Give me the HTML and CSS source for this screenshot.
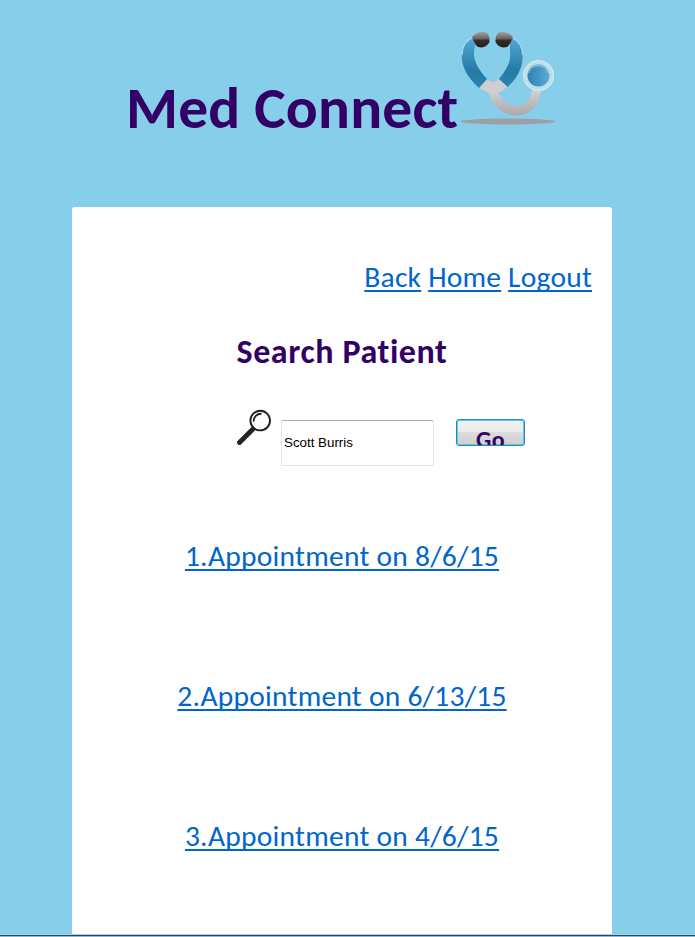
FILE: index.html
```html
<!DOCTYPE html>
<html lang="en">
<head>
<meta charset="utf-8">
<title>Med Connect</title>
<link rel="stylesheet" href="styles.css">
</head>
<body>
<header class="banner">
  <h1 class="brand">Med Connect</h1>
  <svg class="logo" viewBox="0 0 100 100" width="100" height="100" aria-hidden="true">
    <defs>
      <linearGradient id="tube" x1="0" y1="0" x2="0" y2="1"><stop offset="0" stop-color="#55a8d8"/><stop offset=".65" stop-color="#247ba4"/><stop offset="1" stop-color="#2f82ab"/></linearGradient>
      <linearGradient id="tip" x1="0" y1="0" x2="0" y2="1"><stop offset="0" stop-color="#aaa6a5"/><stop offset=".45" stop-color="#69605f"/><stop offset=".55" stop-color="#382d2c"/><stop offset="1" stop-color="#241b1a"/></linearGradient>
      <linearGradient id="metal" x1="0" y1="0" x2="0" y2="1"><stop offset="0" stop-color="#d3d3d5"/><stop offset="1" stop-color="#a9a9ab"/></linearGradient>
      <linearGradient id="disc" x1="0" y1="0" x2="1" y2="0"><stop offset="0" stop-color="#2982b1"/><stop offset="1" stop-color="#5facd5"/></linearGradient>
    </defs>
    <ellipse cx="48" cy="93.500" rx="47.500" ry="3" fill="#9da0a3"/>
    <path d="M28 63 L37 62 Q44 78 57 78 Q70 77 72 62 L81 61 Q78 87 56 87.500 Q36 87 28 63Z" fill="url(#metal)"/>
    <path d="M12 10 Q3 15 2 25 Q0 43 19 60 L27 51 Q13 36 14 24 Q15 17 17 11Z" fill="url(#tube)"/>
    <path d="M53 10 Q61 15 62.500 25 Q64 44 47.500 59 L39 51 Q52 36 50 23 L50 11Z" fill="url(#tube)"/>
    <path d="M19.500 60 L27 51.500 Q33 56 39 51.500 L47 58.500 Q42 65 36 65 Q28 66 19.500 60Z" fill="#cfcfd1"/>
    <path d="M12 10 Q2 15 2 27 M53 10 Q63 16 62.500 27" fill="none" stroke="#b5e2f4" stroke-width="1"/>
    <path d="M12 9 Q20 1 27 5 Q30 8 29.500 14 Q26 21 18 19 Q15 17 12 9Z" fill="url(#tip)"/>
    <path d="M53 9 Q45 1 38 5 Q35 8 35.500 14 Q39 21 47 19 Q50 17 53 9Z" fill="url(#tip)"/>
    <circle cx="78.500" cy="47.500" r="15.600" fill="#bfe0e9"/>
    <circle cx="78.500" cy="47.500" r="15" fill="none" stroke="#d5ecf1"/>
    <circle cx="78.500" cy="47.500" r="11" fill="url(#disc)"/>
    <path d="M68.500 45 A10.500 10.500 0 0 1 88.500 45" fill="none" stroke="#c3e6f3" stroke-width=".8"/>
  </svg>
</header>
<main class="panel">
  <nav class="nav"><a href="#">Back</a> <a href="#">Home</a> <a href="#">Logout</a></nav>
  <h2 class="heading">Search Patient</h2>
  <form class="search">
    <svg class="glass" viewBox="0 0 36 37" width="36" height="37" aria-hidden="true">
      <path d="M3.500 33.500 L17 20" stroke="#242424" stroke-width="4.800" stroke-linecap="round"/>
      <circle cx="24.200" cy="11.600" r="9.800" fill="#fff" stroke="#202020" stroke-width="1.900"/>
      <path d="M17.800 12.600 A7 7 0 0 1 25.600 4.800" fill="none" stroke="#242424" stroke-width="1.800"/>
    </svg>
    <input class="query" type="text" value="Scott Burris" aria-label="Patient name">
    <button class="go" type="button">Go</button>
  </form>
  <ul class="appointments">
    <li><a href="#">1.Appointment on 8/6/15</a></li>
    <li><a href="#">2.Appointment on 6/13/15</a></li>
    <li><a href="#">3.Appointment on 4/6/15</a></li>
  </ul>
</main>
<footer class="edge"></footer>
</body>
</html>
```
FILE: styles.css
```css
* { box-sizing: border-box; }
body {
  margin: 0;
  height: 937px;
  display: flex;
  flex-direction: column;
  overflow: hidden;
  background: #87ceeb;
  color: #330066;
  font-family: Calibri, Carlito, Lato, sans-serif;
  font-variant-ligatures: none;
}
.banner { height: 207px; display: flex; align-items: flex-start; padding: 28px 0 0 126px; }
.brand { margin: 48px 0 0; width: 334px; font-size: 59.5px; line-height: 64px; font-weight: 700; letter-spacing: .2px; white-space: nowrap; }
.logo { flex: none; }
.panel {
  width: 540px;
  height: 727px;
  margin-left: 72px;
  padding: 52px 20px 0;
  background: #fff;
  border-radius: 3px 3px 0 0;
}
a { color: #0066cc; text-decoration: underline; text-decoration-thickness: 2px; text-underline-offset: 3px; text-decoration-skip-ink: none; }
.nav { height: 36px; line-height: 36px; font-size: 29.5px; letter-spacing: .22px; text-align: right; white-space: nowrap; }
.heading { margin: 39px 0 0; height: 36px; line-height: 36px; font-size: 34px; letter-spacing: .6px; text-align: center; white-space: nowrap; }
.search { display: flex; align-items: flex-start; height: 58px; margin: 39px 0 0 144px; }
.glass { flex: none; }
.query {
  width: 153px;
  height: 46px;
  margin: 11px 0 0 9px;
  padding: 0 2px 2px;
  border: 1px solid #e2e3ea;
  border-top-color: #abadb3;
  border-radius: 2px;
  background: #fff;
  color: #000;
  font: 13.33px "Liberation Sans", Arial, sans-serif;
}
.go {
  width: 69px;
  height: 27px;
  margin: 10px 0 0 22px;
  padding: 7px 0 0;
  overflow: hidden;
  border: 1px solid #3c7fb1;
  border-radius: 3px;
  box-shadow: inset 0 0 0 1px #48d0f5;
  background: linear-gradient(#f2f2f2 0, #ebebeb 49%, #dcdcdc 50%, #cfcfcf);
  color: #330066;
  font: 700 24px/25px Calibri, Carlito, Lato, sans-serif;
  letter-spacing: .5px;
  text-align: center;
  clip-path: inset(0);
}
.appointments { margin: 71px 0 0; padding: 0; list-style: none; text-align: center; font-size: 29.5px; letter-spacing: .25px; line-height: 36px; white-space: nowrap; }
.appointments li { height: 140px; }
.edge { height: 3px; background: linear-gradient(#b9c8cf 0 1px, #294b68 1px 2px, #87b9d8 2px); }
```
